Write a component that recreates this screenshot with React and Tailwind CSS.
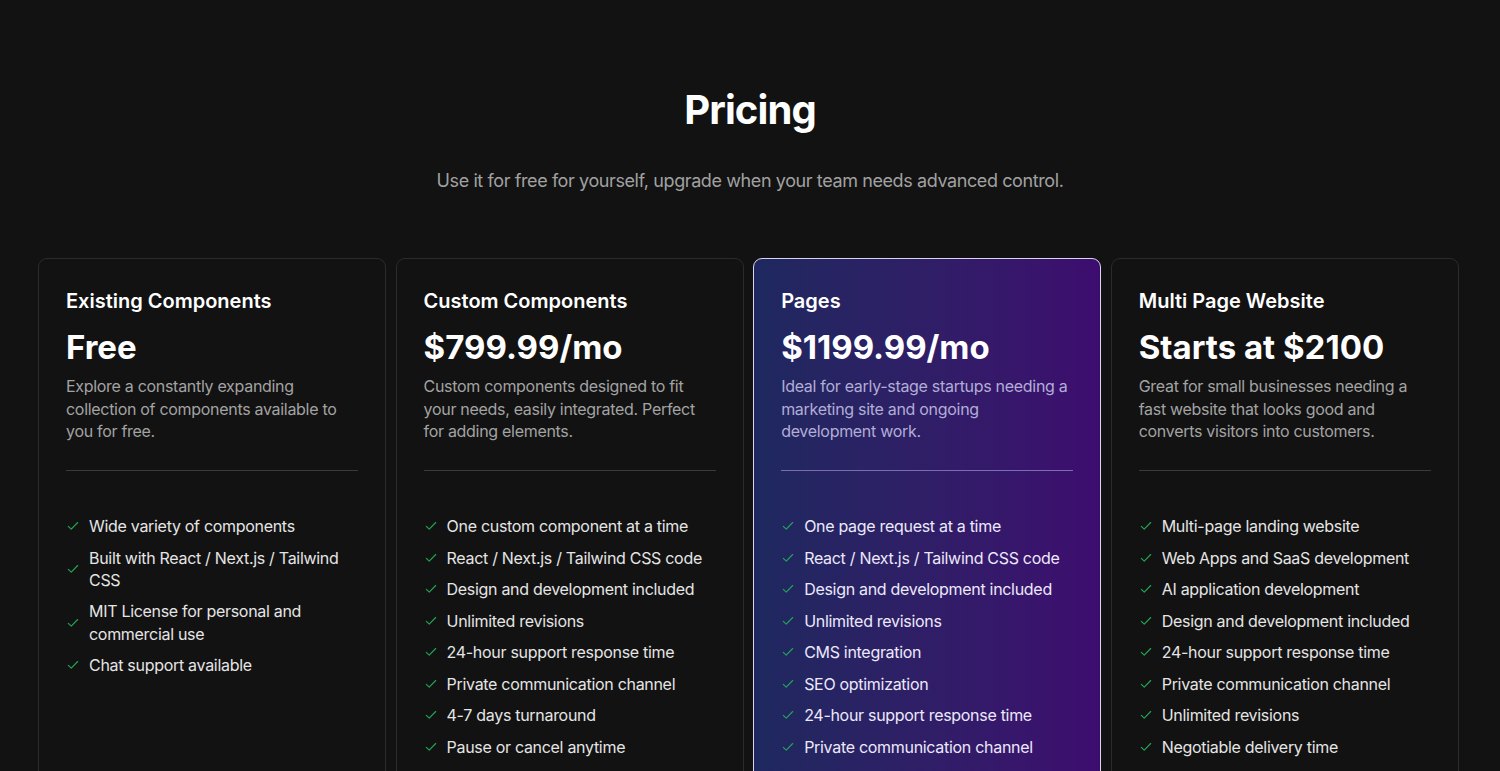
import React from "react";

const plans = [
  {
    name: "Existing Components",
    price: "Free",
    desc: "Explore a constantly expanding collection of components available to you for free.",
    features: [
      "Wide variety of components",
      "Built with React / Next.js / Tailwind CSS",
      "MIT License for personal and commercial use",
      "Chat support available",
    ],
  },
  {
    name: "Custom Components",
    price: "$799.99/mo",
    desc: "Custom components designed to fit your needs, easily integrated. Perfect for adding elements.",
    features: [
      "One custom component at a time",
      "React / Next.js / Tailwind CSS code",
      "Design and development included",
      "Unlimited revisions",
      "24-hour support response time",
      "Private communication channel",
      "4-7 days turnaround",
      "Pause or cancel anytime",
    ],
  },
  {
    name: "Pages",
    price: "$1199.99/mo",
    desc: "Ideal for early-stage startups needing a marketing site and ongoing development work.",
    featured: true,
    features: [
      "One page request at a time",
      "React / Next.js / Tailwind CSS code",
      "Design and development included",
      "Unlimited revisions",
      "CMS integration",
      "SEO optimization",
      "24-hour support response time",
      "Private communication channel",
      "Pause or cancel anytime",
    ],
  },
  {
    name: "Multi Page Website",
    price: "Starts at $2100",
    desc: "Great for small businesses needing a fast website that looks good and converts visitors into customers.",
    features: [
      "Multi-page landing website",
      "Web Apps and SaaS development",
      "AI application development",
      "Design and development included",
      "24-hour support response time",
      "Private communication channel",
      "Unlimited revisions",
      "Negotiable delivery time",
    ],
  },
];

function Check() {
  return (
    <svg width="14" height="14" viewBox="0 0 24 24" fill="none" stroke="#22a454" strokeWidth="2" strokeLinecap="round" strokeLinejoin="round" className="shrink-0">
      <path d="M4 12.5l5 5L20 6" />
    </svg>
  );
}

function Card({ plan }) {
  const f = plan.featured;
  return (
    <div
      className={
        "rounded-[9px] border px-[27px] pt-7 pb-10 " +
        (f
          ? "border-[#d8d4ee] bg-gradient-to-r from-[#1e285f] to-[#3d0c6f]"
          : "border-[#2b2b2b] bg-[#121212]")
      }
    >
      <h3 className="text-[20px] leading-[28px] font-semibold text-white">{plan.name}</h3>
      <div className="mt-[12px] text-[33px] leading-[40px] font-bold text-white">{plan.price}</div>
      <p className={"mt-[8px] text-[16px] leading-[22.7px] tracking-[-0.3px] " + (f ? "text-[#b2add6]" : "text-[#a3a3a3]")}>
        {plan.desc}
      </p>
      <div className={"mt-[27px] h-px " + (f ? "bg-[#7c6db3]" : "bg-[#3a3a3a]")} />
      <ul className="mt-[44px] flex flex-col gap-[9.2px]">
        {plan.features.map((t) => (
          <li key={t} className="flex items-center gap-[9px]">
            <Check />
            <span className={"text-[16px] leading-[22.3px] tracking-[-0.3px] " + (f ? "text-[#ece9fb]" : "text-[#e5e5e5]")}>{t}</span>
          </li>
        ))}
      </ul>
    </div>
  );
}

export default function App() {
  return (
    <div className="min-h-screen bg-[#121212] pt-[86px] pb-20" style={{ fontFamily: "Inter, 'Noto Sans', sans-serif" }}>
      <h1 className="text-center text-[40px] leading-[48px] font-bold text-white tracking-[-0.9px]">Pricing</h1>
      <p className="mt-[33px] text-center text-[18px] leading-[28px] text-[#a1a1a1] tracking-[-0.4px]">
        Use it for free for yourself, upgrade when your team needs advanced control.
      </p>
      <div className="mt-[63px] pl-[38px] pr-[41px] grid grid-cols-4 gap-[9.3px]">
        {plans.map((p) => (
          <Card key={p.name} plan={p} />
        ))}
      </div>
    </div>
  );
}
